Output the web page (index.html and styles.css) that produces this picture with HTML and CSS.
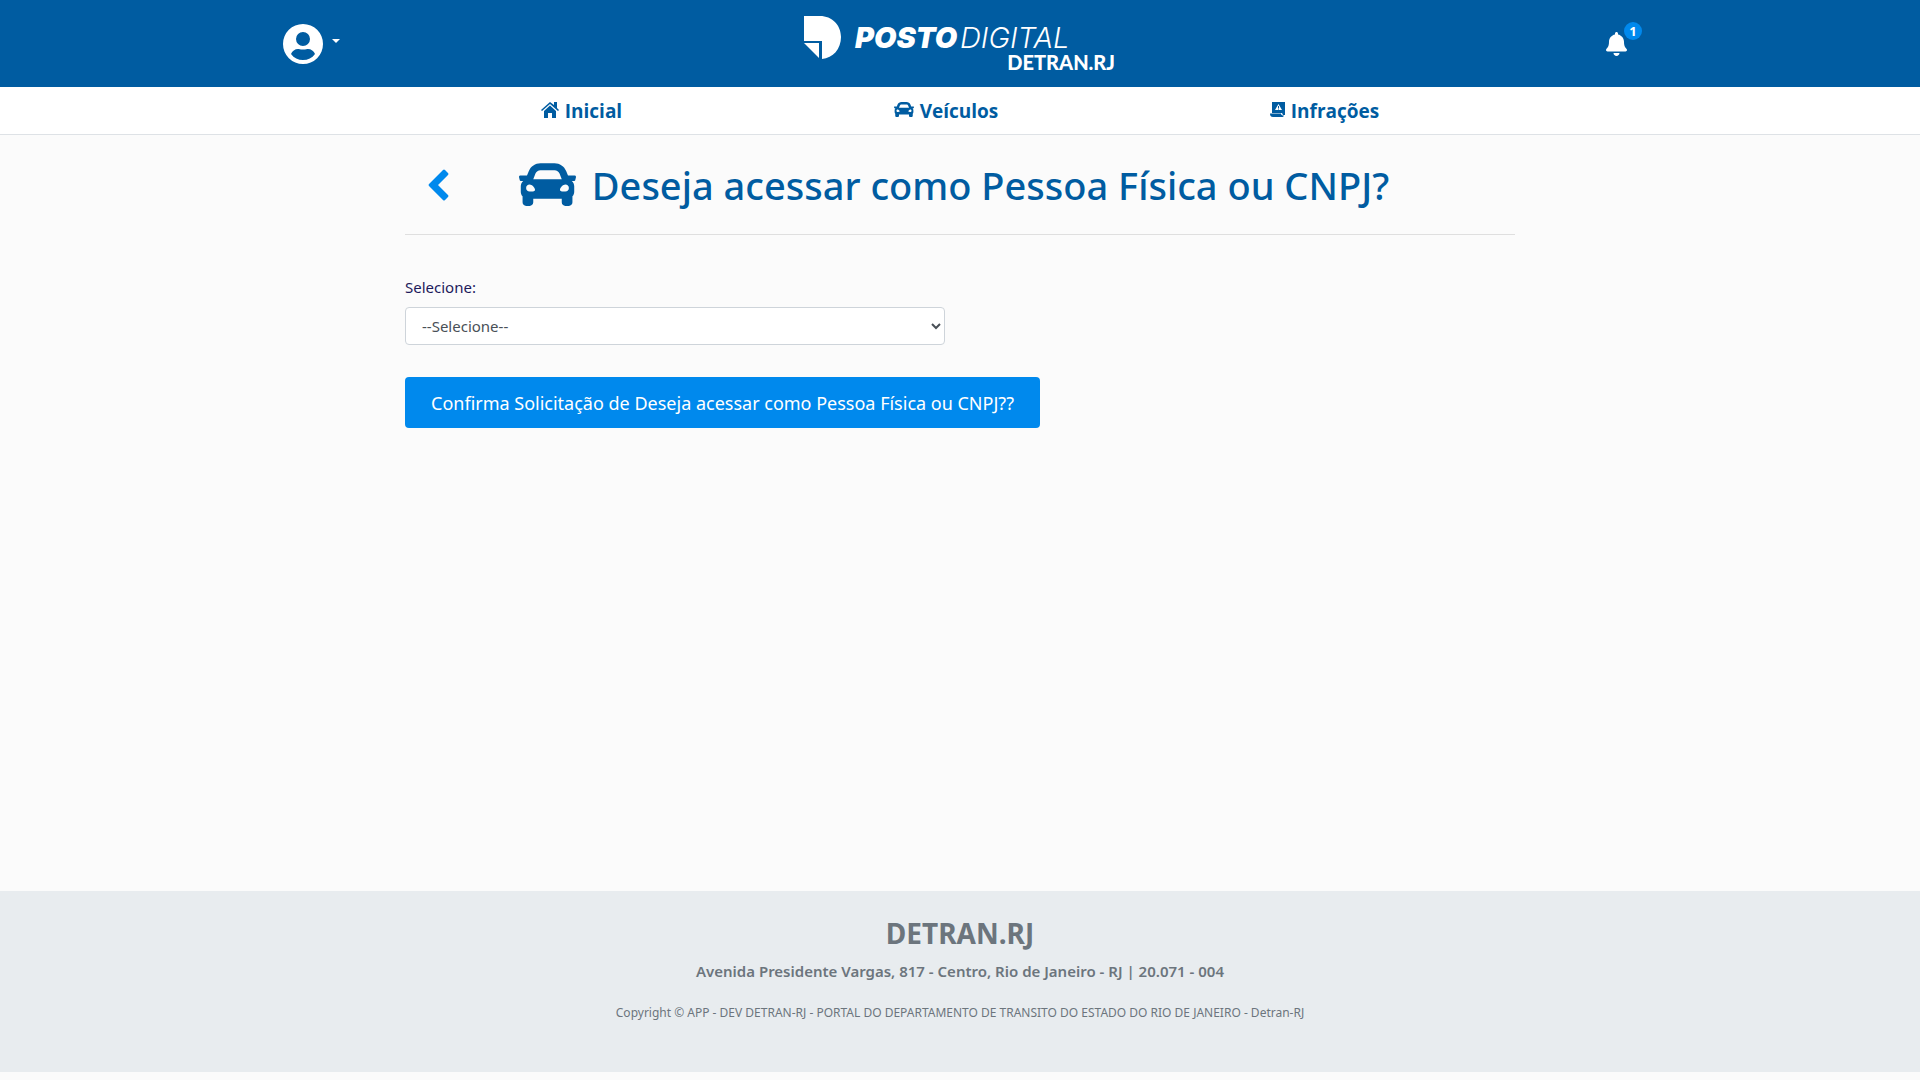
FILE: index.html
```html
<!DOCTYPE html>
<html lang="pt-BR">
<head>
  <meta charset="UTF-8">
  <meta name="viewport" content="width=device-width, initial-scale=1">
  <title>Posto Digital - DETRAN.RJ</title>
  <link rel="stylesheet" href="styles.css">
</head>
<body>
  <svg class="sprite" aria-hidden="true">
    <symbol id="car" viewBox="0 64 512 384">
      <path d="M499.99 176h-59.87l-16.64-41.6C406.38 91.63 365.57 64 319.5 64h-127c-46.06 0-86.88 27.63-103.99 70.4L71.87 176H12.01C4.2 176-1.53 183.34.37 190.91l6 24C7.7 220.25 12.5 224 18.01 224h20.07C24.65 235.73 16 252.78 16 272v48c0 16.12 6.16 30.67 16 41.93V416c0 17.67 14.33 32 32 32h32c17.67 0 32-14.33 32-32v-32h256v32c0 17.67 14.33 32 32 32h32c17.67 0 32-14.33 32-32v-54.07c9.84-11.25 16-25.8 16-41.93v-48c0-19.22-8.65-36.27-22.07-48H494c5.51 0 10.31-3.75 11.64-9.09l6-24c1.89-7.57-3.84-14.91-11.65-14.91zm-352.06-17.83c7.29-18.22 24.94-30.17 44.57-30.17h127c19.63 0 37.28 11.95 44.57 30.17L384 208H128l19.93-49.83zM96 319.8c-19.2 0-32-12.76-32-31.9S76.8 256 96 256s48 28.71 48 47.85-28.8 15.95-48 15.95zm320 0c-19.2 0-48 3.19-48-15.95S396.8 256 416 256s32 12.76 32 31.9-12.8 31.9-32 31.9z"/>
    </symbol>
  </svg>

  <header class="topbar">
    <div class="topbar-inner">
      <button class="user-menu" type="button" aria-label="Menu do usuário">
        <svg class="user-icon" viewBox="0 0 40 40" aria-hidden="true">
          <path fill-rule="evenodd" d="M20 0a20 20 0 1 0 0 40a20 20 0 1 0 0-40zM20 8a7 7 0 1 1 0 14a7 7 0 1 1 0-14zM20 36c-5 0-9-2-12-6c1-3 4-5 7-5c1 0 2 .6 5 .6s4-.6 5-.6c3 0 6 2 7 5c-3 4-7 6-12 6z"/>
        </svg>
        <span class="caret"></span>
      </button>

      <a class="logo" href="#" aria-label="Posto Digital DETRAN.RJ">
        <svg viewBox="0 -2 312 60" aria-hidden="true">
          <path d="M0 0h16c12 0 21 9 21 21s-8 21-19 22V25H0z"/>
          <path d="M0 27h15v15z"/>
          <text class="logo-posto" x="51" y="32">POSTO</text>
          <text class="logo-digital" x="156" y="32">DIGITAL</text>
          <text class="logo-detran" x="311" y="54" text-anchor="end">DETRAN.RJ</text>
        </svg>
      </a>

      <a class="bell" href="#" aria-label="Notificações">
        <svg viewBox="0 0 448 512" aria-hidden="true">
          <path d="M224 512c35.32 0 63.97-28.65 63.97-64H160.03c0 35.35 28.65 64 63.97 64zm215.39-149.71c-19.32-20.76-55.47-51.99-55.47-154.29 0-77.7-54.48-139.9-127.94-155.16V32c0-17.67-14.32-32-31.98-32s-31.98 14.33-31.98 32v20.84C118.56 68.1 64.08 130.3 64.08 208c0 102.3-36.15 133.53-55.47 154.29-6 6.45-8.66 14.16-8.61 21.71.11 16.4 12.98 32 32.1 32h383.8c19.12 0 32-15.6 32.1-32 .05-7.55-2.61-15.27-8.61-21.71z"/>
        </svg>
        <span class="badge">1</span>
      </a>
    </div>
  </header>

  <nav class="menu">
    <ul>
      <li><a href="#">
        <svg class="icon-home" viewBox="0 0 18 16" aria-hidden="true">
          <path d="M9 0L0 8l1 1l8-7l8 7l1-1l-2-2V0h-3v3z"/>
          <path d="M9 3.500l6 5.500v7h-4v-5H7v5H3V9z"/>
        </svg>
        Inicial</a></li>
      <li><a href="#">
        <svg class="icon-car" aria-hidden="true"><use href="#car"/></svg>
        Veículos</a></li>
      <li><a href="#">
        <svg class="icon-fine" viewBox="0 0 15 15" aria-hidden="true">
          <path fill-rule="evenodd" d="M2 0h13v13h-2l-1-2H2zM8.500 2L5 8h7zM8 4h1v2H8zM8 6.500h1v1H8z"/>
          <path d="M0 11.500h11c0 1.500 1 2 3 2c-.5 1-1 1.500-2 1.500H3c-2 0-3-1-3-3.500z"/>
        </svg>
        Infrações</a></li>
    </ul>
  </nav>

  <main class="content">
    <div class="title-row">
      <a class="back" href="#" aria-label="Voltar">
        <svg viewBox="0 0 21 32" aria-hidden="true">
          <path d="M1 15L15 1q1-1 2 0l3 3q1 1 0 2L10 16l10 10q1 1 0 2l-3 3q-1 1-2 0L1 17q-1-1 0-2z"/>
        </svg>
      </a>
      <h1><svg class="title-car" aria-hidden="true"><use href="#car"/></svg>Deseja acessar como Pessoa Física ou CNPJ?</h1>
    </div>
    <hr>
    <form class="access-form">
      <label for="perfil">Selecione:</label>
      <select id="perfil">
        <option>--Selecione--</option>
      </select>
      <button class="btn" type="button">Confirma Solicitação de Deseja acessar como Pessoa Física ou CNPJ??</button>
    </form>
  </main>

  <footer class="footer">
    <h2>DETRAN.RJ</h2>
    <p class="address">Avenida Presidente Vargas, 817 - Centro, Rio de Janeiro - RJ | 20.071 - 004</p>
    <p class="copyright">Copyright © APP - DEV DETRAN-RJ - PORTAL DO DEPARTAMENTO DE TRANSITO DO ESTADO DO RIO DE JANEIRO - Detran-RJ</p>
  </footer>
</body>
</html>
```
FILE: styles.css
```css
* {
  box-sizing: border-box;
}

body {
  margin: 0;
  min-height: 100vh;
  padding-bottom: 8px;
  display: flex;
  flex-direction: column;
  background: #fbfbfb;
  color: #212529;
  font-family: "Segoe UI", "Noto Sans", "Open Sans", sans-serif;
  font-size: 15px;
  line-height: 24px;
}

svg {
  fill: currentColor;
}

.sprite {
  display: none;
}

/* === Top bar === */
.topbar {
  background: #005ca1;
  color: #fff;
}

.topbar-inner {
  max-width: 1360px;
  height: 87px;
  margin: 0 auto;
  padding: 0 3px;
  display: grid;
  grid-template-columns: 1fr auto 1fr;
  align-items: center;
}

.user-menu {
  justify-self: start;
  display: flex;
  gap: 9px;
  padding: 0;
  border: 0;
  background: none;
  color: inherit;
}

.user-icon {
  width: 40px;
  height: 40px;
}

.caret {
  margin-top: 15px;
  width: 8px;
  height: 4px;
  border: 4px solid transparent;
  border-top-color: #fff;
  border-bottom: 0;
}

.logo {
  color: #fff;
}

.logo svg {
  display: block;
  width: 312px;
  height: 60px;
}

.logo-posto,
.logo-digital {
  font: italic 900 29px Inter, sans-serif;
}

.logo-digital {
  font-weight: 300;
}

.logo-detran {
  font: 900 20px Lato, sans-serif;
}

.bell {
  position: relative;
  justify-self: end;
  margin-right: 10px;
  color: #fff;
}

.bell svg {
  display: block;
  width: 21px;
  height: 24px;
}

.badge {
  position: absolute;
  top: -10px;
  left: 18px;
  width: 18px;
  height: 18px;
  border-radius: 50%;
  background: #0089ed;
  font-size: 13px;
  font-weight: 700;
  line-height: 18px;
  text-align: center;
}

/* === Menu === */
.menu {
  background: #fff;
  border-bottom: 1px solid #dee2e6;
}

.menu ul {
  max-width: 1110px;
  margin: 0 auto;
  padding: 0;
  display: flex;
  list-style: none;
}

.menu li {
  flex: 1 1 auto;
}

.menu a {
  display: flex;
  justify-content: center;
  align-items: center;
  gap: 6px;
  height: 47px;
  color: #005ca1;
  font-family: "Segoe UI", "Open Sans", sans-serif;
  font-size: 19px;
  font-weight: 700;
  text-decoration: none;
}

.menu svg {
  margin-bottom: 2px;
}

.icon-home {
  width: 18px;
  height: 16px;
}

.icon-car {
  width: 20px;
  height: 15px;
}

.icon-fine {
  width: 15px;
  height: 15px;
}

/* === Content === */
.content {
  flex: 1;
  width: 100%;
  max-width: 1140px;
  margin: 0 auto;
  padding: 0 15px;
}

.title-row {
  display: grid;
  grid-template-columns: 80px 1fr 92px;
  align-items: center;
  height: 99px;
}

.back {
  padding-left: 23px;
  color: #0089ed;
}

.back svg {
  display: block;
  width: 21px;
  height: 32px;
}

h1 {
  margin: 0;
  display: flex;
  justify-content: center;
  align-items: center;
  gap: 16px;
  color: #005ca1;
  font-size: 38px;
  font-weight: 500;
  line-height: 48px;
  white-space: nowrap;
}

.title-car {
  width: 57px;
  height: 43px;
}

hr {
  margin: 0;
  border: 0;
  border-top: 1px solid #dfdfdf;
}

.access-form {
  display: flex;
  flex-direction: column;
  align-items: flex-start;
  padding-top: 40px;
}

.access-form label {
  margin-bottom: 8px;
  color: #1d1a5b;
}

.access-form select {
  width: 100%;
  max-width: 540px;
  height: 38px;
  padding: 0 12px;
  border: 1px solid #ced4da;
  border-radius: 4px;
  background: #fff;
  color: #495057;
  font: inherit;
}

.btn {
  margin-top: 32px;
  height: 51px;
  padding: 0 26px;
  border: 0;
  border-radius: 4px;
  background: #0089ed;
  color: #fff;
  font: inherit;
  font-size: 18px;
}

/* === Footer === */
.footer {
  height: 181px;
  padding-top: 24px;
  background: #e8ecef;
  color: #6c757d;
  text-align: center;
}

.footer h2 {
  margin: 0 0 8px;
  font-size: 28px;
  font-weight: 700;
  line-height: 36px;
}

.footer p {
  margin: 0;
}

.address {
  font-weight: 600;
}

.footer .copyright {
  margin-top: 18px;
  font-size: 12px;
}
```
